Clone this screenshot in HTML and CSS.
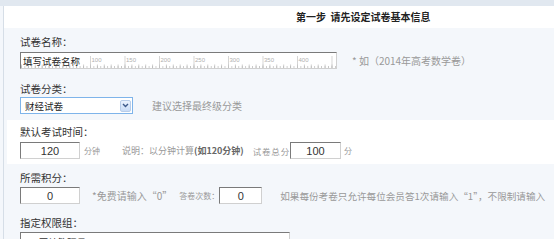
FILE: index.html
```html
<!DOCTYPE html>
<html lang="zh">
<head>
  <meta charset="UTF-8">
  <title>添加试卷</title>
  <link rel="stylesheet" href="styles.css">
</head>
<body>
  <div class="topbar"></div>
  <div id="page">
    <div class="stepTitle">第一步&nbsp;&nbsp;请先设定试卷基本信息</div>

    <!-- 名称与分类 -->
    <div class="sec light">
      <div class="field">
        <div class="label">试卷名称：</div>
        <div class="line">
          <div class="rulerBox">
            <svg class="ruler" width="315" height="15" viewBox="0 0 315 15">
              <defs>
                <pattern id="tick5" width="3.45" height="15" patternUnits="userSpaceOnUse">
                  <rect x="0" y="13" width="0.7" height="2" fill="#b8b8b8"/>
                </pattern>
                <pattern id="tick10" width="6.9" height="15" patternUnits="userSpaceOnUse">
                  <rect x="0" y="11.5" width="0.7" height="3.5" fill="#b8b8b8"/>
                </pattern>
                <pattern id="tick50" x="0" width="34.5" height="15" patternUnits="userSpaceOnUse">
                  <rect x="0" y="3" width="0.7" height="12" fill="#c4c4c4"/>
                </pattern>
              </defs>
              <rect x="0" y="0" width="315" height="15" fill="url(#tick5)"/>
              <rect x="0" y="0" width="315" height="15" fill="url(#tick10)"/>
              <rect x="68" y="0" width="247" height="15" fill="url(#tick50)"/>
              <g class="rulerNum">
                <text x="70.5" y="9">100</text>
                <text x="105" y="9">150</text>
                <text x="139.5" y="9">200</text>
                <text x="174" y="9">250</text>
                <text x="208.5" y="9">300</text>
                <text x="243" y="9">350</text>
                <text x="277.5" y="9">400</text>
              </g>
            </svg>
            <input class="nameInput" type="text" value="填写试卷名称">
          </div>
          <span class="hint gap15">* 如（2014年高考数学卷）</span>
        </div>
      </div>

      <div class="field second">
        <div class="label">试卷分类：</div>
        <div class="line tight">
          <div class="selectBox">
            <span class="selectText">财经试卷</span>
            <span class="selectBtn">
              <svg width="7" height="5" viewBox="0 0 7 5"><path d="M1 1 L3.5 3.5 L6 1" fill="none" stroke="#3d5a8a" stroke-width="1.4"/></svg>
            </span>
          </div>
          <span class="hint gap19">建议选择最终级分类</span>
        </div>
      </div>
    </div>

    <!-- 考试时间 -->
    <div class="sec white timeSec">
      <div class="field">
        <div class="label">默认考试时间：</div>
        <div class="line">
          <input class="numInput w60" type="text" value="120">
          <span class="small gap4">分钟</span>
          <span class="hint note gap22">说明：以分钟计算<b class="strong">(如120分钟)</b></span>
          <span class="small wide gap9">试卷总分</span>
          <input class="numInput w51" type="text" value="100">
          <span class="small gap3">分</span>
        </div>
      </div>
    </div>

    <!-- 积分与权限 -->
    <div class="sec light scoreSec">
      <div class="field">
        <div class="label">所需积分：</div>
        <div class="line">
          <input class="numInput w60" type="text" value="0">
          <span class="hint gap12">*免费请输入“0”</span>
          <span class="small gap7">答卷次数：</span>
          <input class="numInput w43" type="text" value="0">
          <span class="hint long gap18">如果每份考卷只允许每位会员答1次请输入“1”，不限制请输入</span>
        </div>
      </div>
      <div class="field third">
        <div class="label">指定权限组：</div>
        <div class="groupBox">
          <div class="groupItem">· 网站管理员</div>
        </div>
      </div>
    </div>
  </div>
</body>
</html>
```

FILE: styles.css
```css
/* 全局 */
body {
  margin: 0;
  height: 239px;
  background-color: #f4f7fb;
  font-family: "Noto Sans CJK SC", sans-serif;
  font-size: 10px;
  color: #333;
  overflow: hidden;
  white-space: nowrap;
}
.topbar {
  height: 6px;
  background-color: #e1e8f0;
}
#page {
  margin-left: 3px;
  border-left: 1px solid #d6dee7;
}
/* 标题 */
.stepTitle {
  height: 22px;
  line-height: 22px;
  background-color: #fff;
  padding-left: 292px;
  font-weight: bold;
  font-size: 10px;
  color: #222;
}
/* 区块 */
.sec {
  padding: 8px 0 6px 16px;
}
.light {
  background-color: #f4f7fb;
}
.white {
  background-color: #fff;
  margin-left: 3px;
  padding-left: 13px;
}
.timeSec {
  padding-top: 6px;
  padding-bottom: 5px;
}
.scoreSec {
  padding-bottom: 0;
}
.label {
  height: 12px;
  line-height: 12px;
  font-size: 10.5px;
  color: #333;
  margin-bottom: 4px;
}
.second {
  margin-top: 14px;
}
.second .label {
  margin-bottom: 2px;
}
.scoreSec .label {
  margin-bottom: 3px;
}
.third {
  margin-top: 13px;
}
.line {
  display: flex;
  align-items: center;
  height: 17px;
}
.hint {
  color: #999;
  font-size: 10px;
  line-height: 12px;
}
.note {
  font-size: 9px;
}
.long {
  font-size: 9.6px;
}
.small {
  color: #999;
  font-size: 8px;
  line-height: 12px;
}
.wide {
  font-size: 8.5px;
  letter-spacing: 0.8px;
}
.strong {
  color: #666;
}
.gap3 { margin-left: 3px; }
.gap4 { margin-left: 4px; }
.gap7 { margin-left: 7px; }
.gap9 { margin-left: 9px; }
.gap12 { margin-left: 12px; }
.gap15 { margin-left: 15px; }
.gap18 { margin-left: 18px; }
.gap19 { margin-left: 19px; }
.gap22 { margin-left: 22px; }
/* 带标尺的名称输入框 */
.rulerBox {
  position: relative;
  width: 315px;
  height: 15px;
  background-color: #fff;
  border: 1px solid;
  border-color: #7a7a7a #d0d0d0 #d0d0d0 #7a7a7a;
}
.ruler {
  position: absolute;
  left: 0;
  top: 0;
}
.rulerNum text {
  font-family: "Liberation Sans", sans-serif;
  font-size: 6px;
  fill: #b0b0b0;
}
.nameInput {
  position: relative;
  width: 100%;
  height: 15px;
  margin: 0;
  padding: 0 0 0 2px;
  border: none;
  background: transparent;
  font-family: "Noto Sans CJK SC", sans-serif;
  font-size: 9.5px;
  color: #222;
  box-sizing: border-box;
  outline: none;
}
/* 下拉框 */
.selectBox {
  display: flex;
  align-items: center;
  width: 111px;
  height: 15px;
  border: 1px solid #7eb4ea;
  background-color: #fff;
}
.selectText {
  flex: 1;
  padding-left: 4px;
  font-size: 9.5px;
  line-height: 12px;
  color: #222;
}
.selectBtn {
  display: flex;
  align-items: center;
  justify-content: center;
  width: 11px;
  height: 12px;
  margin-right: 1px;
  border: 1px solid #b8cde9;
  border-radius: 2px;
  background: linear-gradient(#eaf2fd, #c9dcf6);
  box-sizing: border-box;
}
/* 数字输入框 */
.numInput {
  height: 17px;
  margin: 0;
  padding: 0;
  border: 1px solid;
  border-color: #7a7a7a #d0d0d0 #d0d0d0 #7a7a7a;
  background-color: #fff;
  font-family: "Liberation Sans", Arial, sans-serif;
  font-size: 11px;
  color: #333;
  text-align: center;
  box-sizing: border-box;
}
.w60 { width: 60px; }
.w51 { width: 51px; }
.w43 { width: 43px; }
/* 权限组 */
.groupBox {
  width: 262px;
  height: 7px;
  overflow: hidden;
  border: 1px solid;
  border-bottom: none;
  border-color: #7a7a7a #d0d0d0 #d0d0d0 #7a7a7a;
  background-color: #fff;
  padding: 3px 0 0 6px;
}
.groupItem {
  font-size: 9.5px;
  line-height: 12px;
  color: #333;
}
```
